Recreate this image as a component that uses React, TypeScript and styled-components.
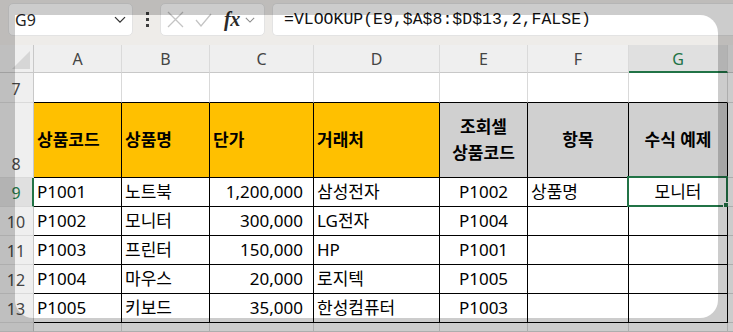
import React from "react";
import styled, { createGlobalStyle } from "styled-components";

const Global = createGlobalStyle`
  html, body { margin: 0; padding: 0; background: #ffffff; }
  * { box-sizing: border-box; }
`;

const Frame = styled.div`
  position: relative;
  width: 733px;
  height: 332px;
  overflow: hidden;
  background: #ffffff;
  font-family: "Noto Sans", "Noto Sans CJK KR", sans-serif;
`;

const TopBar = styled.div`
  height: 45px;
  display: flex;
  align-items: flex-start;
  padding: 3px 0 0 8px;
  background: #eeece9;
`;

const NameBox = styled.div`
  width: 125px;
  height: 33px;
  flex: none;
  background: #ffffff;
  border: 1px solid #e3e3e3;
  border-radius: 5px;
  display: flex;
  align-items: center;
  justify-content: space-between;
  padding: 0 6px 0 6px;
  font-size: 16px;
  color: #1f1f1f;
`;

const Dots = styled.div`
  width: 27px;
  height: 33px;
  flex: none;
  display: flex;
  flex-direction: column;
  align-items: center;
  justify-content: center;
  gap: 3px;
  padding-left: 1px;
  span {
    width: 3px;
    height: 3px;
    background: #3c3c3c;
  }
`;

const FxGroup = styled.div`
  width: 105px;
  height: 33px;
  flex: none;
  background: #ffffff;
  border: 1px solid #e3e3e3;
  border-radius: 5px;
  display: flex;
  align-items: center;
  padding-left: 6px;
`;

const FxText = styled.span`
  font-family: "Liberation Serif", serif;
  font-style: italic;
  font-weight: bold;
  font-size: 20px;
  color: #2a2a2a;
  margin-left: 12px;
  letter-spacing: -0.5px;
`;

const FxChevron = styled.span`
  display: flex;
  margin-left: 5px;
`;

const FormulaBox = styled.div`
  flex: 1;
  height: 33px;
  margin-left: 7px;
  background: #ffffff;
  border: 1px solid #e3e3e3;
  border-right: none;
  border-radius: 5px 0 0 5px;
  display: flex;
  align-items: center;
  padding-left: 11px;
  font-family: "Liberation Mono", monospace;
  font-size: 16.5px;
  color: #111;
  white-space: nowrap;
`;

const Sheet = styled.div`
  display: grid;
  grid-template-columns: 34px 88px 88px 104px 126px 88px 101px 99px 1fr;
  grid-template-rows: 28px 30px 75px repeat(5, 29px) 1fr;
  height: 287px;
`;

const Corner = styled.div`
  background: #efefef;
  border-right: 1px solid #c8c8c8;
  border-bottom: 1px solid #c8c8c8;
  display: flex;
  align-items: flex-end;
  justify-content: flex-end;
  padding: 0 3px 3px 0;
`;

const ColHead = styled.div<{ $active?: boolean }>`
  background: ${(p) => (p.$active ? "#e0e0e0" : "#efefef")};
  border-right: 1px solid #dadada;
  border-bottom: ${(p) => (p.$active ? "2px solid #217346" : "1px solid #c8c8c8")};
  color: ${(p) => (p.$active ? "#217346" : "#444444")};
  font-size: 16px;
  display: flex;
  align-items: center;
  justify-content: center;
  padding-top: ${(p) => (p.$active ? "1px" : "0")};
`;

const RowHead = styled.div<{ $active?: boolean }>`
  background: ${(p) => (p.$active ? "#e0e0e0" : "#efefef")};
  border-right: ${(p) => (p.$active ? "2px solid #217346" : "1px solid #c8c8c8")};
  border-bottom: 1px solid #dadada;
  color: ${(p) => (p.$active ? "#217346" : "#444444")};
  font-size: 16px;
  display: flex;
  align-items: flex-end;
  justify-content: center;
  padding-bottom: 2px;
  padding-right: ${(p) => (p.$active ? "0" : "1px")};
`;

type Align = "left" | "right" | "center";

const Cell = styled.div<{
  $align?: Align;
  $bg?: string;
  $bold?: boolean;
  $right?: string;
  $bottom?: string;
}>`
  position: relative;
  background: ${(p) => p.$bg || "#ffffff"};
  border-right: 1px solid ${(p) => p.$right || "#d9d9d9"};
  border-bottom: 1px solid ${(p) => p.$bottom || "#d9d9d9"};
  display: flex;
  align-items: center;
  justify-content: ${(p) =>
    p.$align === "right" ? "flex-end" : p.$align === "center" ? "center" : "flex-start"};
  text-align: ${(p) => p.$align || "left"};
  padding: 0 ${(p) => (p.$align === "right" ? "10px" : "3px")} 0 3px;
  font-size: 17px;
  font-weight: ${(p) => (p.$bold ? 700 : 400)};
  line-height: 26px;
  color: #000000;
  white-space: nowrap;
`;

const Selection = styled.div`
  position: absolute;
  top: -2px;
  left: -2px;
  right: -1px;
  bottom: -1px;
  border: 2px solid #217346;
  pointer-events: none;
`;

const Handle = styled.div`
  position: absolute;
  right: -4px;
  bottom: -4px;
  width: 7px;
  height: 7px;
  background: #217346;
  border: 1px solid #ffffff;
`;

const Shade = styled.div`
  position: absolute;
  left: 15px;
  top: 15px;
  width: 703px;
  height: 303px;
  border-radius: 0 18px 18px 18px;
  box-shadow: 0 0 0 900px rgba(0, 0, 0, 0.2);
  pointer-events: none;
  z-index: 10;
`;

const cols = ["A", "B", "C", "D", "E", "F", "G"];
const aligns: Align[] = ["left", "left", "right", "left", "center", "left", "center"];

const headers: { text: React.ReactNode; align: Align; bg: string }[] = [
  { text: "상품코드", align: "left", bg: "#ffc000" },
  { text: "상품명", align: "left", bg: "#ffc000" },
  { text: "단가", align: "left", bg: "#ffc000" },
  { text: "거래처", align: "left", bg: "#ffc000" },
  { text: <>조회셀<br />상품코드</>, align: "center", bg: "#d0d0d0" },
  { text: "항목", align: "center", bg: "#d0d0d0" },
  { text: "수식 예제", align: "center", bg: "#d0d0d0" },
];

const data = [
  ["P1001", "노트북", "1,200,000", "삼성전자", "P1002", "상품명", "모니터"],
  ["P1002", "모니터", "300,000", "LG전자", "P1004", "", ""],
  ["P1003", "프린터", "150,000", "HP", "P1001", "", ""],
  ["P1004", "마우스", "20,000", "로지텍", "P1005", "", ""],
  ["P1005", "키보드", "35,000", "한성컴퓨터", "P1003", "", ""],
];

const Chevron = ({ size = 12, color = "#333" }: { size?: number; color?: string }) => (
  <svg width={size} height={size * 0.6} viewBox="0 0 12 7" fill="none">
    <path d="M1 1l5 5 5-5" stroke={color} strokeWidth="1.3" />
  </svg>
);

export default function App() {
  return (
    <Frame>
      <Global />
      <TopBar>
        <NameBox>
          <span>G9</span>
          <Chevron />
        </NameBox>
        <Dots>
          <span />
          <span />
          <span />
        </Dots>
        <FxGroup>
          <svg width="17" height="17" viewBox="0 0 17 17" fill="none">
            <path d="M1 1l15 15M16 1L1 16" stroke="#c4c4c4" strokeWidth="1.3" />
          </svg>
          <svg width="17" height="14" viewBox="0 0 17 14" fill="none" style={{ marginLeft: 11 }}>
            <path d="M1 7l5 6L16 1" stroke="#c4c4c4" strokeWidth="1.3" />
          </svg>
          <FxText>fx</FxText>
          <FxChevron>
            <Chevron size={10} color="#8a8a8a" />
          </FxChevron>
        </FxGroup>
        <FormulaBox>=VLOOKUP(E9,$A$8:$D$13,2,FALSE)</FormulaBox>
      </TopBar>
      <Sheet>
        <Corner>
          <svg width="18" height="18" viewBox="0 0 18 18">
            <path d="M18 0V18H0Z" fill="#d6d6d6" />
          </svg>
        </Corner>
        {cols.map((c) => (
          <ColHead key={c} $active={c === "G"}>
            {c}
          </ColHead>
        ))}
        <ColHead />

        <RowHead>7</RowHead>
        {cols.map((c) => (
          <Cell key={c} $bottom="#000" />
        ))}
        <Cell $right="transparent" />

        <RowHead>8</RowHead>
        {headers.map((h, i) => (
          <Cell key={i} $align={h.align} $bg={h.bg} $bold $right="#000" $bottom="#000">
            <span>{h.text}</span>
          </Cell>
        ))}
        <Cell $right="transparent" />

        {data.map((row, r) => (
          <React.Fragment key={r}>
            <RowHead $active={r === 0}>{9 + r}</RowHead>
            {row.map((v, i) => (
              <Cell key={i} $align={aligns[i]} $right="#000" $bottom="#000">
                {v}
                {r === 0 && i === 6 && (
                  <Selection>
                    <Handle />
                  </Selection>
                )}
              </Cell>
            ))}
            <Cell $right="transparent" />
          </React.Fragment>
        ))}

        <RowHead />
        {cols.map((c) => (
          <Cell key={c} />
        ))}
        <Cell $right="transparent" />
      </Sheet>
      <Shade />
    </Frame>
  );
}
